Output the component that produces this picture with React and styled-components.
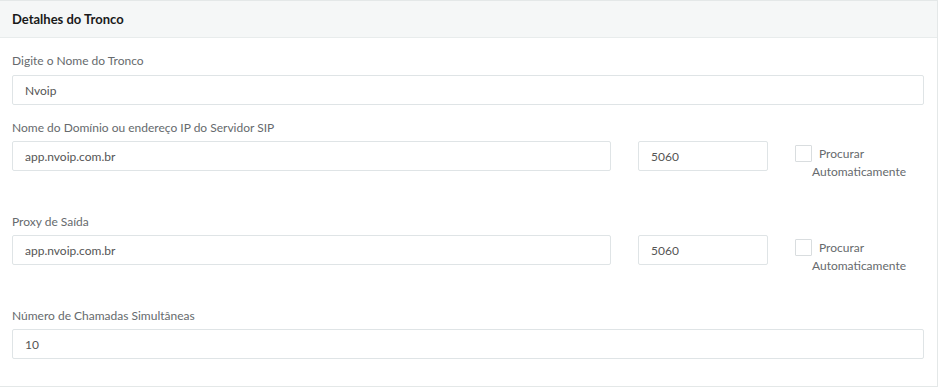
import React from "react"
import styled, { createGlobalStyle } from "styled-components"

const Global = createGlobalStyle`
  body {
    margin: 0;
    background: #ffffff;
    font-family: Lato, "Open Sans", sans-serif;
  }
`

export default function App() {
  return (
    <>
      <Global />
      <Panel>
        <PanelHeader>Detalhes do Tronco</PanelHeader>
        <PanelBody>
          <Group>
            <Label>Digite o Nome do Tronco</Label>
            <Input defaultValue="Nvoip" />
          </Group>

          <Group $gap={14}>
            <Label $tight>Nome do Domínio ou endereço IP do Servidor SIP</Label>
            <Row>
              <Input defaultValue="app.nvoip.com.br" />
              <Input defaultValue="5060" />
              <CheckLabel>
                <Box />
                Procurar Automaticamente
              </CheckLabel>
            </Row>
          </Group>

          <Group $gap={32}>
            <Label $tight>Proxy de Saída</Label>
            <Row>
              <Input defaultValue="app.nvoip.com.br" />
              <Input defaultValue="5060" />
              <CheckLabel>
                <Box />
                Procurar Automaticamente
              </CheckLabel>
            </Row>
          </Group>

          <Group $gap={32}>
            <Label $tight>Número de Chamadas Simultâneas</Label>
            <Input defaultValue="10" />
          </Group>
        </PanelBody>
      </Panel>
    </>
  )
}

const Panel = styled.div`
  width: 938px;
  height: 387px;
  box-sizing: border-box;
  border: 1px solid #e4e8e8;
  border-left: none;
  background: #fff;
`

const PanelHeader = styled.div`
  height: 37px;
  box-sizing: border-box;
  background: #f5f7f7;
  border-bottom: 1px solid #e8ecec;
  padding: 0 12px;
  display: flex;
  align-items: center;
  font-size: 13px;
  font-weight: 700;
  color: #1a1a1a;
`

const PanelBody = styled.div`
  padding: 14px 13px 0 12px;
`

const Group = styled.div`
  margin-top: ${(p) => p.$gap || 0}px;
`

const Label = styled.div`
  font-size: 12px;
  line-height: 18px;
  color: #666a6d;
  margin-bottom: ${(p) => (p.$tight ? 4 : 5)}px;
`

const Input = styled.input`
  width: 100%;
  height: 30px;
  box-sizing: border-box;
  border: 1px solid #dfe4e6;
  border-radius: 2px;
  padding: 0 12px;
  font-family: inherit;
  font-size: 12px;
  color: #555;
  outline: none;
  background: #fff;
`

const Row = styled.div`
  display: grid;
  grid-template-columns: 599px 130px 113px;
  column-gap: 27px;
  align-items: start;
`

const CheckLabel = styled.label`
  display: block;
  padding-left: 17px;
  margin-top: 4px;
  font-size: 12px;
  line-height: 18px;
  color: #666a6d;
`

const Box = styled.span`
  display: inline-block;
  width: 17px;
  height: 17px;
  box-sizing: border-box;
  border: 1px solid #d9dddf;
  border-radius: 1px;
  margin-left: -17px;
  margin-right: 7px;
  vertical-align: -4px;
  background: #fff;
`
